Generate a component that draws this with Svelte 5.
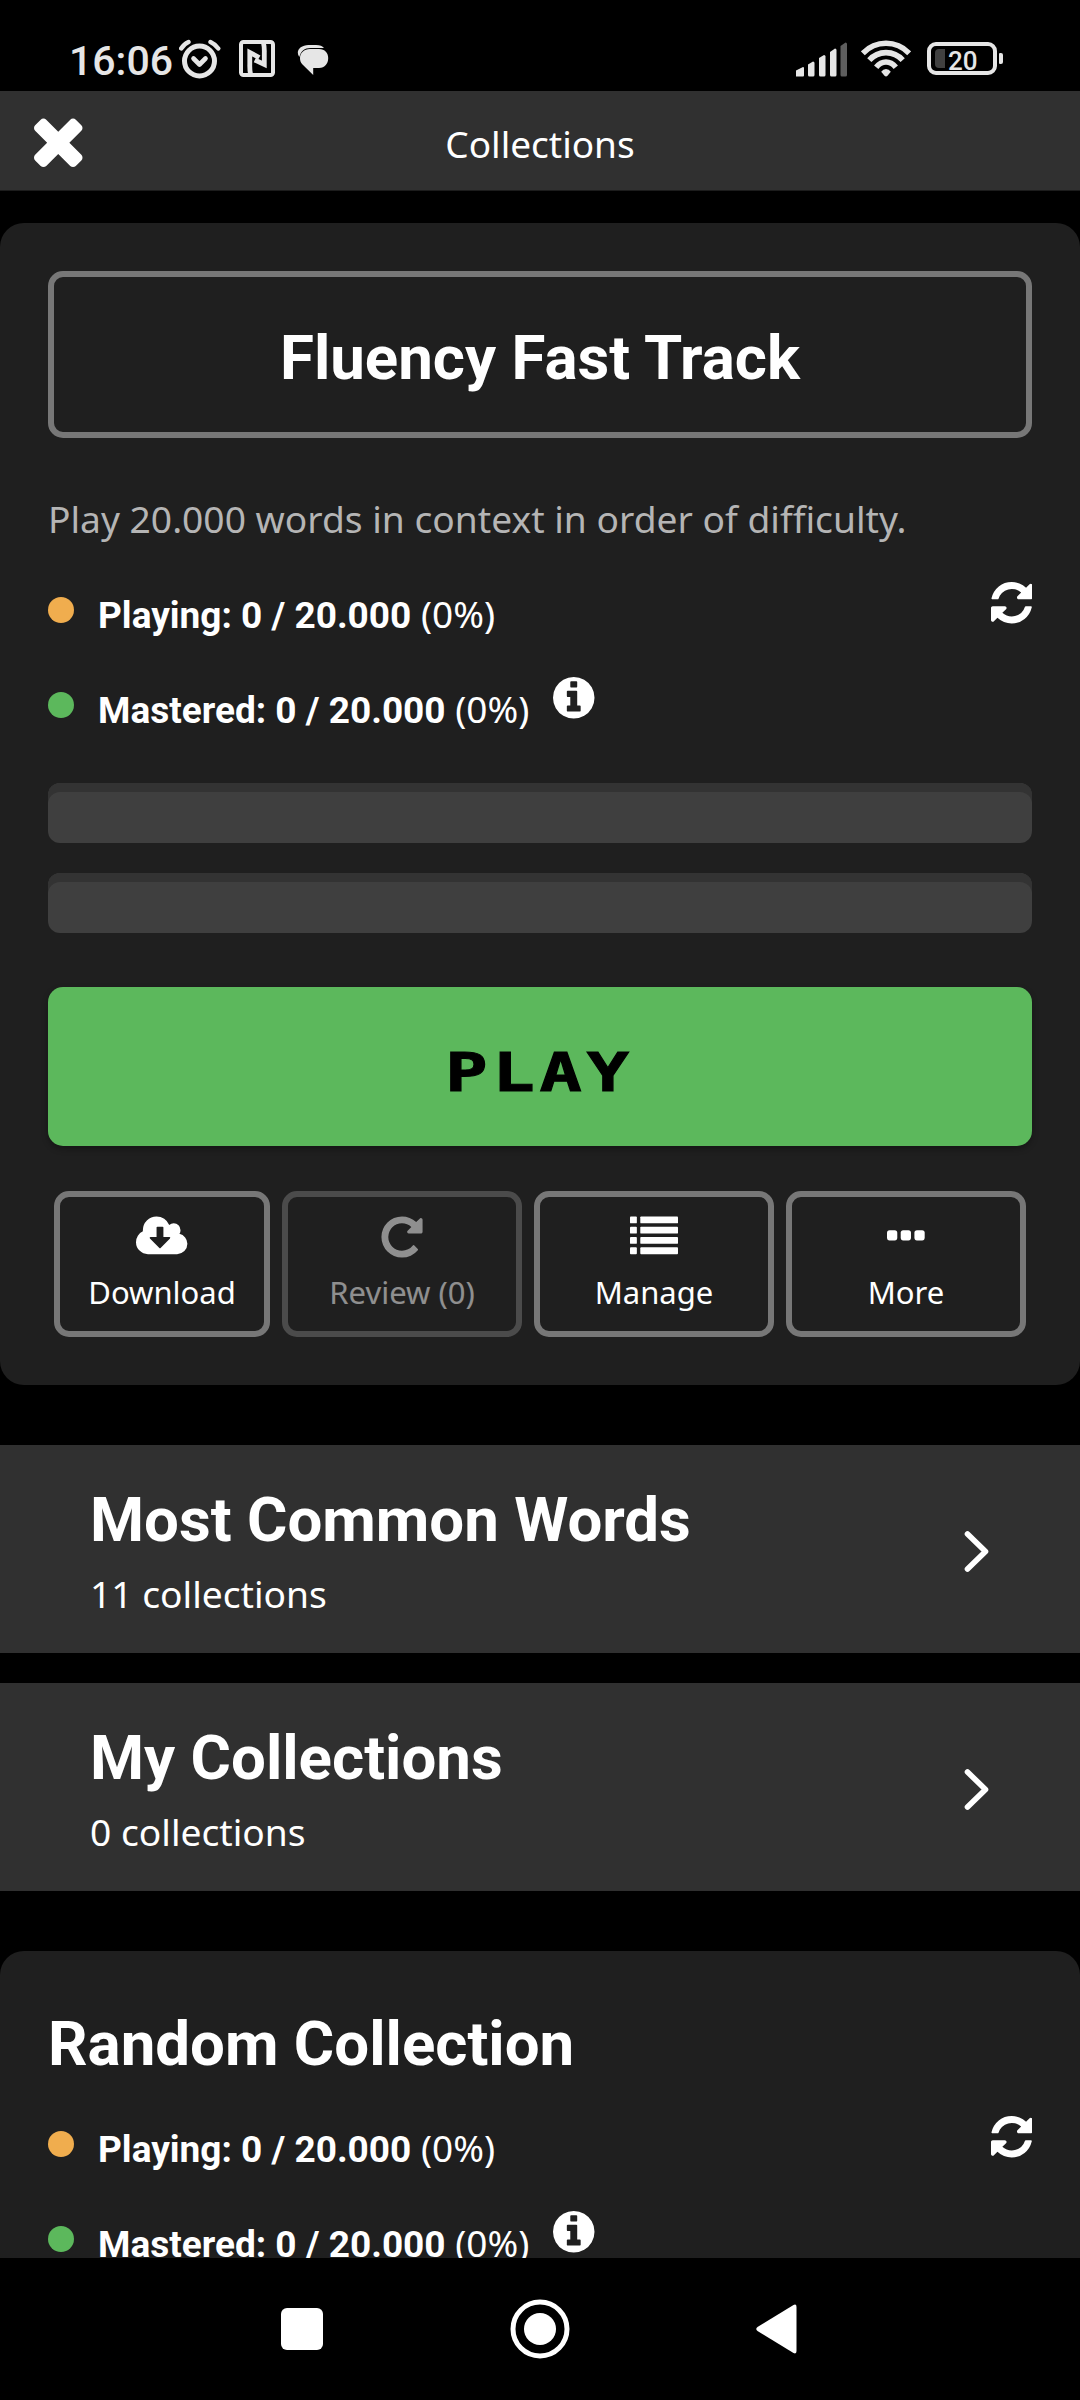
<script>
  const actions = [
    { label: 'Download', icon: 'cloud' },
    { label: 'Review (0)', icon: 'repeat', disabled: true },
    { label: 'Manage', icon: 'list' },
    { label: 'More', icon: 'dots' },
  ];

  const groups = [
    { name: 'Most Common Words', count: 11 },
    { name: 'My Collections', count: 0 },
  ];

  const listRows = [128, 512, 896, 1280];
</script>

{#snippet stats()}
  <div class="stats">
    <div class="stat">
      <span class="dot playing"></span>
      <span class="stat-text"><strong>Playing: 0 / 20.000</strong> (0%)</span>
      <svg class="stat-icon refresh" viewBox="128 128 1536 1536">
        <path d="M1639 1056q0 5-1 7-64 268-268 434.5t-478 166.5q-146 0-282.5-55t-243.5-157l-129 129q-19 19-45 19t-45-19-19-45v-448q0-26 19-45t45-19h448q26 0 45 19t19 45-19 45l-137 137q71 66 161 102t187 36q134 0 250-65t186-179q11-17 53-117 8-23 30-23h192q13 0 22.5 9.5t9.5 22.5zm25-800v448q0 26-19 45t-45 19h-448q-26 0-45-19t-19-45 19-45l138-138q-148-137-349-137-134 0-250 65t-186 179q-11 17-53 117-8 23-30 23h-199q-13 0-22.5-9.5t-9.5-22.5v-7q65-268 270-434.5t480-166.5q146 0 284 55.5t245 156.5l130-129q19-19 45-19t45 19 19 45z" />
      </svg>
    </div>
    <div class="stat">
      <span class="dot mastered"></span>
      <span class="stat-text"><strong>Mastered: 0 / 20.000</strong> (0%)</span>
      <svg class="stat-icon info" viewBox="128 128 1536 1536">
        <path d="M1152 1376v-160q0-14-9-23t-23-9h-96v-512q0-14-9-23t-23-9h-320q-14 0-23 9t-9 23v160q0 14 9 23t23 9h96v320h-96q-14 0-23 9t-9 23v160q0 14 9 23t23 9h448q14 0 23-9t9-23zm-128-896v-160q0-14-9-23t-23-9h-192q-14 0-23 9t-9 23v160q0 14 9 23t23 9h192q14 0 23-9t9-23zm640 416q0 209-103 385.5t-279.5 279.5-385.5 103-385.5-103-279.5-279.5-103-385.5 103-385.5 279.5-279.5 385.5-103 385.5 103 279.5 279.5 103 385.5z" />
      </svg>
    </div>
  </div>
{/snippet}

<div class="screen">
  <div class="status-bar">
    <div class="status-left">
      <span class="clock">16:06</span>
      <svg class="alarm" viewBox="0 0 42 40" width="42" height="40">
        <circle cx="20.5" cy="22" r="15" fill="none" stroke="#e6e6e6" stroke-width="5" />
        <path d="M14.5 19.5l6 6 6-6" fill="none" stroke="#e6e6e6" stroke-width="4.6" stroke-linecap="round" stroke-linejoin="round" />
        <path d="M2.2 9.5Q5 5 9.5 3M31.5 3Q36 5 39.3 9.5" fill="none" stroke="#e6e6e6" stroke-width="4.4" stroke-linecap="round" />
      </svg>
      <svg class="nfc" viewBox="0 0 36 37" width="36" height="37">
        <rect x="2" y="2" width="32" height="33" rx="2.5" fill="none" stroke="#e6e6e6" stroke-width="4" />
        <path d="M11.5 34Q10.6 30 10.8 24V12.5l9.500 5M24.500 3Q25.500 7 25.300 13V24.500l-9.500-4.500" fill="none" stroke="#e6e6e6" stroke-width="4.8" />
      </svg>
      <svg class="chat" viewBox="0 0 32 30" width="32" height="30">
        <path d="M11.5 0H19C23 0 25.5 1 27 3H13.5C7.5 3 4 6 2.3 12C-1.8 6.500 3 0 11.500 0Z" fill="#e6e6e6" />
        <path d="M13 4H22C28 4 31.2 8 31.2 13C31.2 18.5 28 23 22 23H16.2V30L5.5 19.5C3.6 17.7 3 15.5 3 13C3 8 7 4 13 4Z" fill="#e6e6e6" />
      </svg>
    </div>
    <div class="status-right">
      <svg class="signal" viewBox="0 0 51 35" width="51" height="35">
        <path d="M0 28.5l7-3.5q1 0 1 1v7.5q0 1-1 1H0z" fill="#e6e6e6" />
        <path d="M12 22.5l5-3q1.5 0 1.5 1.5v12q0 1.5-1.5 1.5h-3.5q-1.5 0-1.5-1.500z" fill="#e6e6e6" />
        <path d="M23 16l5-3q1.5 0 1.5 1.500v18.500q0 1.500-1.500 1.500h-3.500q-1.500 0-1.500-1.500z" fill="#e6e6e6" />
        <path d="M34 10l5-3.500q1.500 0 1.500 1.500v25q0 1.500-1.500 1.500h-3.500q-1.500 0-1.500-1.500z" fill="#e6e6e6" />
        <path d="M44.500 4l5-3.500q1.500 0 1.500 1.500v31q0 1.500-1.500 1.500h-3.500q-1.500 0-1.500-1.500z" fill="#5e5e5e" />
      </svg>
      <svg class="wifi" viewBox="0 0 50 37" width="50" height="37">
        <g fill="none" stroke="#e6e6e6" stroke-width="5.6">
          <path d="M1.8 13.3Q11.5 3.3 25 3.3T48.2 13.3" />
          <path d="M8.3 20.2Q15 12.6 25 12.6T41.7 20.2" />
          <path d="M15.2 27.2Q19.5 22 25 22T34.8 27.2" />
        </g>
        <path d="M20.2 31.8Q22 29 25 29T29.8 31.8L26.5 35.8Q25 37.2 23.5 35.8Z" fill="#e6e6e6" />
      </svg>
      <div class="battery">
        <span class="charge"></span>
        <span class="level">20</span>
      </div>
      <span class="battery-cap"></span>
    </div>
  </div>

  <header>
    <svg class="close" viewBox="302 302 1188 1188">
      <path d="M1490 1322q0 40-28 68l-136 136q-28 28-68 28t-68-28l-294-294-294 294q-28 28-68 28t-68-28l-136-136q-28-28-28-68t28-68l294-294-294-294q-28-28-28-68t28-68l136-136q28-28 68-28t68 28l294 294 294-294q28-28 68-28t68 28l136 136q28 28 28 68t-28 68l-294 294 294 294q28 28 28 68z" />
    </svg>
    <h1>Collections</h1>
  </header>

  <main>
    <section class="card">
      <h2 class="boxed">Fluency Fast Track</h2>
      <p class="description">Play 20.000 words in context in order of difficulty.</p>
      {@render stats()}
      <div class="bars">
        <div class="bar"></div>
        <div class="bar"></div>
      </div>
      <button class="play"><span>PLAY</span></button>
      <div class="actions">
        {#each actions as action}
          <button class="action" disabled={action.disabled}>
            {#if action.icon === 'cloud'}
              <svg viewBox="0 0 1920 1792" width="51.4" height="48">
                <path d="M1280 928q0-14-9-23t-23-9h-224v-352q0-13-9.5-22.5t-22.5-9.5h-192q-13 0-22.5 9.5t-9.5 22.5v352h-224q-13 0-22.5 9.5t-9.5 22.5q0 14 9 23l352 352q9 9 23 9t23-9l351-351q10-12 10-24zm640 224q0 159-112.5 271.5t-271.5 112.5h-1088q-185 0-316.5-131.5t-131.5-316.5q0-130 70-240t188-165q-2-30-2-43 0-212 150-362t362-150q156 0 285.5 87t188.5 231q71-62 166-62 106 0 181 75t75 181q0 76-41 138 130 31 213.5 135.5t83.5 238.5z" />
              </svg>
            {:else if action.icon === 'repeat'}
              <svg viewBox="0 0 1792 1792" width="48" height="48">
                <path d="M1664 256v448q0 26-19 45t-45 19h-448q-42 0-59-40-17-39 14-69l138-138q-148-137-349-137-104 0-198.5 40.5t-163.5 109.5-109.5 163.5-40.5 198.5 40.5 198.5 109.5 163.5 163.5 109.5 198.5 40.5q119 0 225-52t179-147q7-10 23-12 15 0 25 9l137 138q9 8 9.5 20.5t-7.5 22.5q-109 132-264 204.5t-327 72.5q-156 0-298-61t-245-164-164-245-61-298 61-298 164-245 245-164 298-61q147 0 284.5 55.5t244.5 156.5l130-129q29-31 70-14 39 17 39 59z" />
              </svg>
            {:else if action.icon === 'list'}
              <svg viewBox="0 0 1792 1792" width="48" height="48">
                {#each listRows as y}
                  <rect x="0" {y} width="256" height="256" rx="32" />
                  <rect x="384" {y} width="1408" height="256" rx="32" />
                {/each}
              </svg>
            {:else}
              <svg viewBox="0 0 1408 1792" width="37.7" height="48">
                <rect x="0" y="640" width="384" height="384" rx="96" />
                <rect x="512" y="640" width="384" height="384" rx="96" />
                <rect x="1024" y="640" width="384" height="384" rx="96" />
              </svg>
            {/if}
            <span>{action.label}</span>
          </button>
        {/each}
      </div>
    </section>

    <div class="groups">
      {#each groups as group}
        <div class="group">
          <div>
            <h2>{group.name}</h2>
            <p>{group.count} collections</p>
          </div>
          <svg class="chevron" viewBox="0 0 25 41" width="25" height="41">
            <path d="M3.5 3l18 17.500L3.500 38" fill="none" stroke="#fff" stroke-width="5.6" stroke-linecap="round" stroke-linejoin="round" />
          </svg>
        </div>
      {/each}
    </div>

    <section class="card random">
      <h2>Random Collection</h2>
      {@render stats()}
    </section>
  </main>

  <nav>
    <svg viewBox="0 0 42 42" width="42" height="42"><rect width="42" height="42" rx="6" /></svg>
    <svg viewBox="0 0 60 60" width="60" height="60">
      <circle cx="30" cy="30" r="27" fill="none" stroke="#fff" stroke-width="5" />
      <circle cx="30" cy="30" r="16" />
    </svg>
    <svg viewBox="0 0 41 50" width="41" height="50">
      <path d="M37.5 1Q40.5-.5 40.5 3V47Q40.5 50.5 37.5 49L1.5 27Q-1 25 1.5 23Z" />
    </svg>
  </nav>
</div>

<style>
  :global(body) {
    background: #000;
  }

  .screen {
    width: 1080px;
    height: 2400px;
    display: flex;
    flex-direction: column;
    overflow: hidden;
    background: #000;
    color: #fff;
    font-family: 'Noto Sans', sans-serif;
    font-size: 37.2px;
  }

  h1, h2, p {
    margin: 0;
  }

  svg {
    display: block;
    flex: none;
    fill: currentColor;
  }

  .status-bar {
    height: 91px;
    flex: none;
    box-sizing: border-box;
    padding: 39px 77px 0 69px;
    display: flex;
    justify-content: space-between;
    color: #e6e6e6;
    font-family: Roboto, sans-serif;
  }

  .status-left,
  .status-right {
    display: flex;
    align-items: flex-start;
  }

  .clock {
    width: 110px;
    font-size: 41px;
    font-weight: 500;
    line-height: 44px;
    white-space: nowrap;
  }

  .nfc {
    margin: 1px 0 0 18px;
  }

  .chat {
    margin: 6px 0 0 22px;
  }

  .signal {
    margin-top: 3px;
  }

  .wifi {
    margin: 1px 0 0 14px;
  }

  .battery {
    width: 70px;
    height: 33px;
    box-sizing: border-box;
    margin: 3px 0 0 16px;
    padding: 4px;
    border: 4px solid #e6e6e6;
    border-radius: 9px;
    display: flex;
    align-items: center;
  }

  .charge {
    width: 10px;
    height: 19px;
    background: #404040;
    border-radius: 4px 0 0 4px;
  }

  .level {
    margin: 4px 0 0 3px;
    font-size: 26px;
    font-weight: 500;
    line-height: 26px;
  }

  .battery-cap {
    width: 4px;
    height: 11px;
    margin: 14px 0 0 2px;
    background: #e6e6e6;
    border-radius: 1px 2px 2px 1px;
  }

  header {
    height: 100px;
    flex: none;
    box-sizing: border-box;
    display: grid;
    grid-template-columns: 1fr auto 1fr;
    align-items: center;
    padding: 0 34px;
    background: #303030;
    border-bottom: 1px solid #1c1c1c;
  }

  .close {
    width: 48.5px;
    height: 48.5px;
    overflow: visible;
  }

  h1 {
    padding-top: 7px;
    font-size: 37px;
    font-weight: 400;
    line-height: 54px;
  }

  main {
    height: 2067px;
    flex: none;
    box-sizing: border-box;
    padding-top: 32px;
    overflow: hidden;
  }

  .card {
    padding: 48px;
    background: #1f1f1f;
    border-radius: 24px;
  }

  h2 {
    font-family: Roboto, sans-serif;
    font-size: 61.8px;
    font-weight: 700;
    line-height: 72px;
  }

  .boxed {
    height: 167px;
    box-sizing: border-box;
    padding-top: 45px;
    border: 6px solid #777;
    border-radius: 15px;
    text-align: center;
  }

  .description {
    margin-top: 54px;
    color: #b5b5b5;
    line-height: 54px;
  }

  .stats {
    margin-top: 36px;
  }

  .stat {
    height: 95px;
    display: flex;
    align-items: flex-start;
  }

  .dot {
    width: 26px;
    height: 26px;
    margin: 15px 24px 0 0;
    border-radius: 50%;
  }

  .playing {
    background: #f0ad4e;
  }

  .mastered {
    background: #5cb85c;
  }

  .stat-text {
    margin-top: 10px;
    font-size: 37px;
    line-height: 44px;
  }

  strong {
    font-family: Roboto, sans-serif;
    font-weight: 700;
  }

  .stat-icon {
    width: 41.5px;
    height: 41.5px;
  }

  .refresh {
    margin-left: auto;
  }

  .info {
    margin-left: 24px;
  }

  .bars {
    margin-top: 11px;
    display: grid;
    gap: 30px;
  }

  .bar {
    height: 60px;
    background: #3f3f3f;
    border-radius: 12px;
    box-shadow: inset 0 9px 0 #333;
  }

  button {
    font-family: inherit;
    color: inherit;
  }

  .play {
    display: block;
    width: 100%;
    height: 159px;
    margin-top: 54px;
    padding: 13px 0 0;
    border: none;
    border-radius: 15px;
    background: #5cb85c;
    box-shadow: 0 3px 6px rgba(0, 0, 0, 0.3);
    color: #000;
    font-family: 'DejaVu Sans Mono', monospace;
    font-size: 54px;
    font-weight: 700;
    line-height: 60px;
    letter-spacing: 3.8px;
  }

  .play span {
    display: inline-block;
    transform: scaleX(1.3);
    -webkit-text-stroke: 1px #000;
  }

  .actions {
    display: grid;
    grid-template-columns: 216px 240px 240px 240px;
    gap: 12px;
    margin: 45px 6px 0;
  }

  .action {
    height: 146px;
    box-sizing: border-box;
    display: flex;
    flex-direction: column;
    align-items: center;
    padding: 16px 0 0;
    border: 6px solid #777;
    border-radius: 15px;
    background: none;
    font-size: 31px;
    line-height: 44px;
  }

  .action span {
    margin-top: 9px;
  }

  .action:disabled {
    opacity: 0.5;
  }

  .groups {
    display: grid;
    gap: 30px;
    margin: 60px 0;
  }

  .group {
    height: 208px;
    box-sizing: border-box;
    display: flex;
    justify-content: space-between;
    padding: 39px 91px 0 90px;
    background: #303030;
  }

  .group p {
    margin-top: 11px;
    line-height: 54px;
  }

  .chevron {
    margin-top: 47px;
  }

  .random {
    padding-top: 57px;
  }

  nav {
    flex: 1;
    display: grid;
    grid-template-columns: 42px 60px 41px;
    justify-content: center;
    align-items: center;
    column-gap: 186.5px;
    margin-right: 2px;
  }
</style>
